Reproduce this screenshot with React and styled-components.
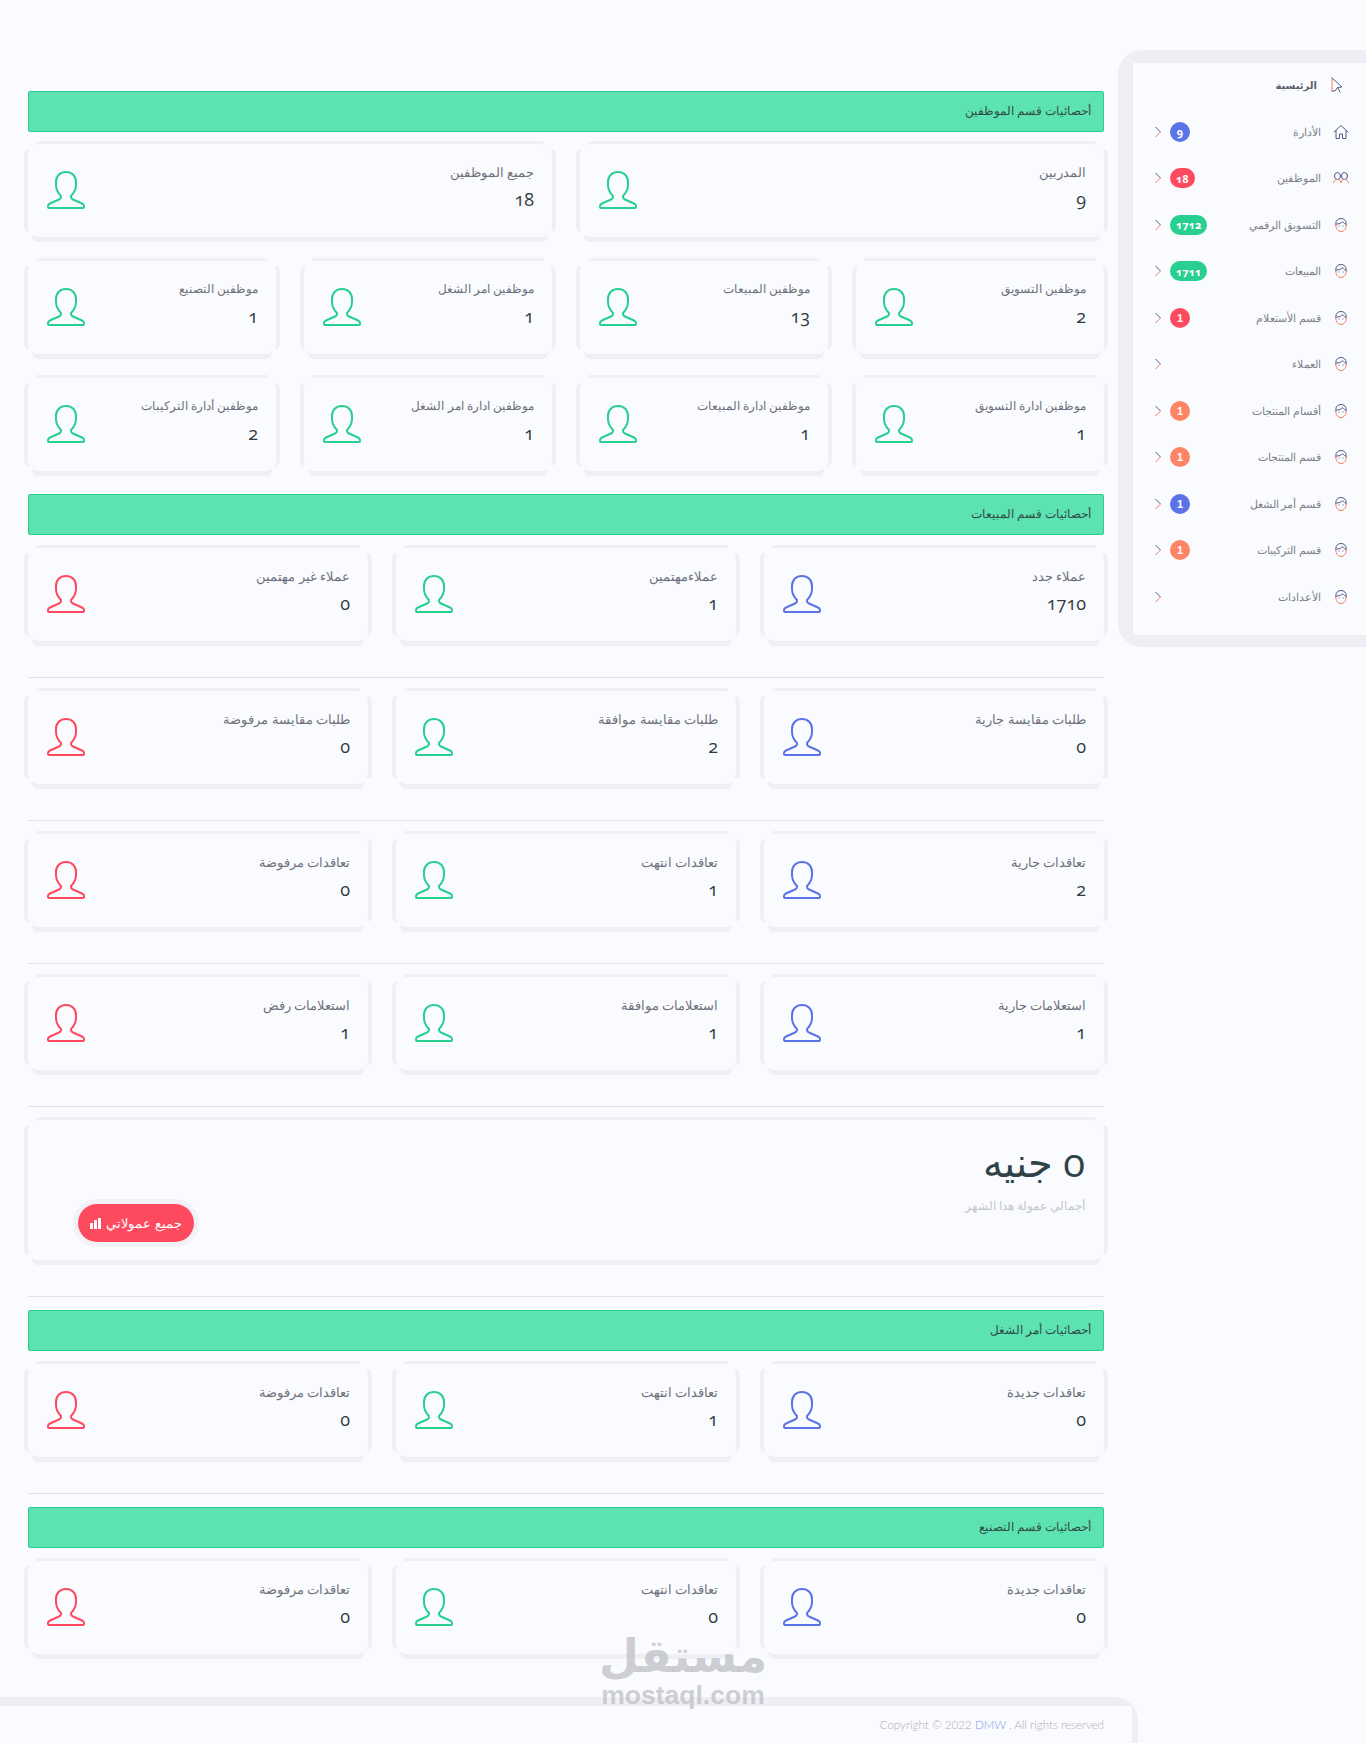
import React from 'react';
import styled, { createGlobalStyle } from 'styled-components';

const GlobalStyle = createGlobalStyle`
  html, body {
    margin: 0;
    padding: 0;
    background: #fafbfe;
  }
  body {
    font-family: "Noto Sans", "DejaVu Sans", sans-serif;
    color: #4d4f5c;
  }
  * {
    box-sizing: border-box;
  }
`;

const colors = {
  green: '#27cf91',
  blue: '#5b73e8',
  red: '#fd4a5f',
  orange: '#fd8566',
};

const Page = styled.div`
  position: relative;
  display: flex;
  align-items: flex-start;
  width: 1366px;
  height: 1743px;
  overflow: hidden;
`;

const Main = styled.main`
  width: 1138px;
  flex: none;
  padding-top: 91px;
`;

const Content = styled.div`
  margin: 0 34px 0 28px;
  direction: rtl;
`;

const SectionBar = styled.div`
  height: 41px;
  margin-bottom: ${(p) => (p.$first ? 12 : 13)}px;
  padding: 0 12px 3px;
  display: flex;
  align-items: center;
  background: #5de2b1;
  border: 1px solid #2bcd8f;
  border-radius: 2px;
  font-size: 12.4px;
  font-weight: 300;
  color: #2f4b46;
`;

const CardRow = styled.div`
  display: grid;
  grid-template-columns: repeat(${(p) => p.$cols}, 1fr);
  gap: 28px;
  margin-bottom: ${(p) => p.$gap || 0}px;
`;

/* side strips stop short of the corners */
const softEdge = `
  box-shadow: -9px 0 0 -5px #eff0f6, 9px 0 0 -5px #eff0f6, 0 -11px 0 -8px #eff0f6, 0 9px 0 -4px #eff0f6;
`;

const Card = styled.div`
  height: 93px;
  padding: 18px 18px 0 19px;
  display: flex;
  justify-content: space-between;
  align-items: flex-start;
  background: #fafbfe;
  border-radius: 10px;
  ${softEdge}
`;

const CardTitle = styled.div`
  font-size: ${(p) => (p.$large ? 13 : 12.3)}px;
  font-weight: 300;
  line-height: 20px;
  color: #6f717d;
`;

const CardValue = styled.div`
  margin-top: 7px;
  font-family: "Open Sans", serif;
  font-variant-numeric: oldstyle-nums;
  font-size: 18px;
  line-height: 20px;
  color: #343a40;
`;

const PersonSvg = styled.svg`
  width: 38px;
  height: 38px;
  margin-top: 9px;
  flex: none;
  fill: none;
  stroke: ${(p) => colors[p.$tone]};
  stroke-width: 2;
  stroke-linejoin: round;
`;

const Divider = styled.hr`
  height: 1px;
  margin: 36px 0 13px;
  border: 0;
  background: #dfe1e6;
`;

const EarningsCard = styled.div`
  height: 140px;
  padding: 17px 19px 18px 50px;
  display: flex;
  justify-content: space-between;
  align-items: flex-end;
  background: #fafbfe;
  border-radius: 10px;
  ${softEdge}
`;

const EarningsInfo = styled.div`
  align-self: flex-start;
`;

const Amount = styled.div`
  font-family: "Open Sans", serif;
  font-variant-numeric: oldstyle-nums;
  font-size: 40px;
  line-height: 50px;
  color: #2f4347;
`;

const AmountNote = styled.div`
  margin-top: 9px;
  font-size: 12px;
  font-weight: 300;
  line-height: 20px;
  color: #c4c6cd;
`;

const CommissionButton = styled.button`
  width: 116px;
  height: 38px;
  padding: 0;
  display: flex;
  align-items: center;
  justify-content: center;
  gap: 5px;
  background: #fd4a5f;
  border: 0;
  border-radius: 19px;
  box-shadow: 0 0 0 5px #f1f1f6;
  direction: rtl;
  font-family: inherit;
  font-size: 13px;
  font-weight: 300;
  color: #fff;
`;

const BarsSvg = styled.svg`
  width: 11px;
  height: 11px;
  fill: #fff;
`;

const Footer = styled.footer`
  height: 46px;
  margin-top: 43px;
  padding: 9px 6px 0 0;
  background: #eeeef4;
  border-radius: 0 24px 0 0;
`;

const FooterInner = styled.div`
  height: 37px;
  padding: 12px 28px 0 0;
  background: #fafbfe;
  text-align: right;
  font-family: "Lato", sans-serif;
  font-size: 11.6px;
  font-weight: 300;
  color: #b9a9b6;

  b {
    font-weight: 300;
    color: #8195e6;
  }
`;

const Sidebar = styled.aside`
  width: 248px;
  flex: none;
  margin: 50px 0 0 -20px;
  padding: 13px 0 12px 15px;
  background: #eeeef4;
  border-radius: 24px 0 0 24px;
`;

const SidebarInner = styled.nav`
  padding: 0 17px 14px 21px;
  background: #fafbfe;
  direction: rtl;
`;

const MenuRow = styled.div`
  height: 46.5px;
  padding-right: ${(p) => (p.$inset ? 4 : 0)}px;
  padding-bottom: 2px;
  display: flex;
  align-items: center;
`;

const MenuIcon = styled.svg`
  width: 16px;
  height: 16px;
  flex: none;
  margin-left: 12px;
  fill: none;
  stroke-width: 1;
  stroke-linecap: round;
  stroke-linejoin: round;
`;

const MenuLabel = styled.span`
  font-size: ${(p) => (p.$bold ? 10 : 10.5)}px;
  font-weight: ${(p) => (p.$bold ? 700 : 300)};
  color: ${(p) => (p.$bold ? '#5c5e6b' : '#7d7f8b')};
`;

const MenuEnd = styled.div`
  margin-right: auto;
  display: flex;
  align-items: center;
`;

const Badge = styled.span`
  min-width: 20px;
  height: 20px;
  margin-left: 8px;
  padding: 0 6px;
  display: flex;
  align-items: center;
  justify-content: center;
  border-radius: 10px;
  background: ${(p) => colors[p.$tone]};
  font-family: ${(p) => (p.$plain ? '"Liberation Sans"' : '"Open Sans"')}, sans-serif;
  font-variant-numeric: ${(p) => (p.$plain ? 'normal' : 'oldstyle-nums')};
  font-size: 11px;
  font-weight: 700;
  color: #fff;
`;

const Chevron = styled.svg`
  width: 8px;
  height: 12px;
  fill: none;
  stroke-width: 1;
`;

const Watermark = styled.div`
  position: absolute;
  left: 596px;
  top: 1630px;
  width: 174px;
  text-align: center;
  color: rgba(190, 192, 198, 0.75);
  font-weight: 700;
`;

const WatermarkAr = styled.div`
  font-family: "DejaVu Sans", sans-serif;
  font-size: 46px;
  line-height: 52px;
`;

const WatermarkEn = styled.div`
  font-family: "Liberation Sans", sans-serif;
  font-size: 26.5px;
  line-height: 26px;
`;

const Person = ({ tone }) => (
  <PersonSvg $tone={tone} viewBox="0 0 38 38">
    <path d="M19 1C13 1 9 5 9 11v3c0 5 2 8 5 11v1c0 1-1 2-2 2.500l-9 4C1.500 33.200 1 34 1 35v1c0 .7.300 1 1 1h34c.7 0 1-.3 1-1v-1c0-1-.5-1.800-2-2.500l-9-4c-1-.5-2-1.500-2-2.500v-1c3-3 5-6 5-11v-3c0-6-4-10-10-10z" />
  </PersonSvg>
);

const StatCard = ({ title, value, tone = 'green', large }) => (
  <Card>
    <div>
      <CardTitle $large={large}>{title}</CardTitle>
      <CardValue>{value}</CardValue>
    </div>
    <Person tone={tone} />
  </Card>
);

const Stats = ({ items, cols, gap }) => (
  <CardRow $cols={cols} $gap={gap}>
    {items.map((item) => (
      <StatCard key={item[0]} title={item[0]} value={item[1]} tone={item[2]} large={cols < 4} />
    ))}
  </CardRow>
);

const triple = (a, b, c) => [
  [a[0], a[1], 'blue'],
  [b[0], b[1], 'green'],
  [c[0], c[1], 'red'],
];

const CursorIcon = () => (
  <MenuIcon viewBox="0 0 16 16">
    <path d="M3 1v13" stroke="#f0805f" />
    <path d="M3 1l10 9-4.500 .5 2.500 4.500M8.500 10.500L6 14l-3 0" stroke="#555a86" />
  </MenuIcon>
);

const HomeIcon = () => (
  <MenuIcon viewBox="0 0 16 16">
    <path d="M1 8l7-6.500L15 8" stroke="#555a86" />
    <path d="M3 6.500V14.500h3.500V10h3v4.500H13V6.500" stroke="#555a86" />
  </MenuIcon>
);

const UsersIcon = () => (
  <MenuIcon viewBox="0 0 16 16">
    <ellipse cx="4.500" cy="6" rx="3" ry="3.500" stroke="#555a86" />
    <ellipse cx="11.500" cy="6" rx="3" ry="3.500" stroke="#555a86" />
    <path d="M.5 12.500L2.800 9.500M8.300 12.500L6.200 9.500M7.700 12.500L9.800 9.500M15.500 12.500L13.200 9.500" stroke="#f0805f" />
  </MenuIcon>
);

const FaceIcon = () => (
  <MenuIcon viewBox="0 0 16 16">
    <path d="M2.800 8V6.500C2.800 3.500 5 1.500 8 1.500s5.200 2 5.200 5V8" stroke="#555a86" />
    <path d="M2.800 8c0 4 2.200 6.500 5.200 6.500s5.200-2.500 5.200-6.500" stroke="#f0805f" />
    <path d="M3.500 7c2 0 5-.5 6-2.500 .5 1 1.500 2 3 2.500" stroke="#555a86" />
    <path d="M6 9h.2M10 9h.2" stroke="#555a86" />
  </MenuIcon>
);

const menu = [
  { label: 'الأدارة', icon: HomeIcon, badge: '9', tone: 'blue' },
  { label: 'الموظفين', icon: UsersIcon, badge: '18', tone: 'red' },
  { label: 'التسويق الرقمي', icon: FaceIcon, badge: '1712', tone: 'green' },
  { label: 'المبيعات', icon: FaceIcon, badge: '1711', tone: 'green' },
  { label: 'قسم الأستعلام', icon: FaceIcon, badge: '1', tone: 'red' },
  { label: 'العملاء', icon: FaceIcon },
  { label: 'أقسام المنتجات', icon: FaceIcon, badge: '1', tone: 'orange' },
  { label: 'قسم المنتجات', icon: FaceIcon, badge: '1', tone: 'orange' },
  { label: 'قسم أمر الشغل', icon: FaceIcon, badge: '1', tone: 'blue' },
  { label: 'قسم التركيبات', icon: FaceIcon, badge: '1', tone: 'orange' },
  { label: 'الأعدادات', icon: FaceIcon },
];

const MenuItem = ({ item }) => {
  const Icon = item.icon;
  return (
    <MenuRow>
      <Icon />
      <MenuLabel>{item.label}</MenuLabel>
      <MenuEnd>
        {item.badge && (
          <Badge $tone={item.tone} $plain={item.badge === '1'}>
            {item.badge}
          </Badge>
        )}
        <Chevron viewBox="0 0 8 12">
          <path d="M1.500 1l5 5" stroke="#555a86" />
          <path d="M6.500 6l-5 5" stroke="#f0805f" />
        </Chevron>
      </MenuEnd>
    </MenuRow>
  );
};

export default function App() {
  return (
    <Page>
      <GlobalStyle />
      <Main>
        <Content>
          <SectionBar $first>أحصائيات قسم الموظفين</SectionBar>
          <Stats
            cols={2}
            gap={24}
            items={[
              ['المدربين', '9'],
              ['جميع الموظفين', '18'],
            ]}
          />
          <Stats
            cols={4}
            gap={24}
            items={[
              ['موظفين التسويق', '2'],
              ['موظفين المبيعات', '13'],
              ['موظفين امر الشغل', '1'],
              ['موظفين التصنيع', '1'],
            ]}
          />
          <Stats
            cols={4}
            gap={23}
            items={[
              ['موظفين ادارة التسويق', '1'],
              ['موظفين ادارة المبيعات', '1'],
              ['موظفين ادارة امر الشغل', '1'],
              ['موظفين أدارة التركيبات', '2'],
            ]}
          />
          <SectionBar>أحصائيات قسم المبيعات</SectionBar>
          <Stats cols={3} items={triple(['عملاء جدد', '1710'], ['عملاءمهتمين', '1'], ['عملاء غير مهتمين', '0'])} />
          <Divider />
          <Stats cols={3} items={triple(['طلبات مقايسة جارية', '0'], ['طلبات مقايسة موافقة', '2'], ['طلبات مقايسة مرفوضة', '0'])} />
          <Divider />
          <Stats cols={3} items={triple(['تعاقدات جارية', '2'], ['تعاقدات انتهت', '1'], ['تعاقدات مرفوضة', '0'])} />
          <Divider />
          <Stats cols={3} items={triple(['استعلامات جارية', '1'], ['استعلامات موافقة', '1'], ['استعلامات رفض', '1'])} />
          <Divider />
          <EarningsCard>
            <EarningsInfo>
              <Amount>0 جنيه</Amount>
              <AmountNote>أجمالي عمولة هذا الشهر</AmountNote>
            </EarningsInfo>
            <CommissionButton>
              جميع عمولاتي
              <BarsSvg viewBox="0 0 11 11">
                <rect x="0" y="5" width="3" height="6" />
                <rect x="4" y="2" width="3" height="9" />
                <rect x="8" y="0" width="3" height="11" />
              </BarsSvg>
            </CommissionButton>
          </EarningsCard>
          <Divider />
          <SectionBar>أحصائيات أمر الشغل</SectionBar>
          <Stats cols={3} items={triple(['تعاقدات جديدة', '0'], ['تعاقدات انتهت', '1'], ['تعاقدات مرفوضة', '0'])} />
          <Divider />
          <SectionBar>أحصائيات قسم التصنيع</SectionBar>
          <Stats cols={3} items={triple(['تعاقدات جديدة', '0'], ['تعاقدات انتهت', '0'], ['تعاقدات مرفوضة', '0'])} />
        </Content>
        <Footer>
          <FooterInner>
            Copyright © 2022 <b>DMW</b> , All rights reserved
          </FooterInner>
        </Footer>
      </Main>
      <Sidebar>
        <SidebarInner>
          <MenuRow $inset>
            <CursorIcon />
            <MenuLabel $bold>الرئيسية</MenuLabel>
          </MenuRow>
          {menu.map((item) => (
            <MenuItem key={item.label} item={item} />
          ))}
        </SidebarInner>
      </Sidebar>
      <Watermark>
        <WatermarkAr>مستقل</WatermarkAr>
        <WatermarkEn>mostaql.com</WatermarkEn>
      </Watermark>
    </Page>
  );
}
